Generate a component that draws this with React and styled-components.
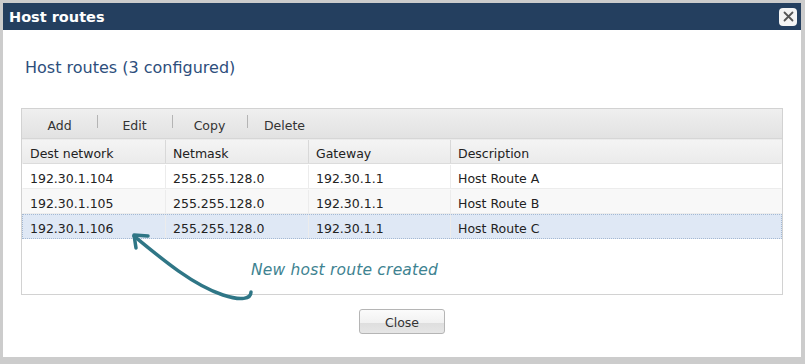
import React from "react";
import styled, { createGlobalStyle } from "styled-components";

const GlobalStyle = createGlobalStyle`
  html, body {
    margin: 0;
    padding: 0;
    background: #ffffff;
  }
  * {
    box-sizing: border-box;
  }
`;

const Frame = styled.div`
  position: relative;
  width: 805px;
  height: 364px;
  border: 3px solid #cccccc;
  border-right-width: 4px;
  border-bottom-width: 7px;
  background: #fff;
  font-family: "DejaVu Sans", Verdana, sans-serif;
  display: flex;
  flex-direction: column;
`;

const TitleBar = styled.div`
  height: 27px;
  flex: none;
  background: #243f5f;
  display: flex;
  align-items: center;
  justify-content: space-between;
  padding: 0 4px 0 6px;
  color: #fff;
  font-weight: bold;
  font-size: 14.5px;
`;

const CloseX = styled.button`
  width: 18px;
  height: 18px;
  border: none;
  border-radius: 4px;
  background: #f4f4f4;
  padding: 0;
  display: flex;
  align-items: center;
  justify-content: center;
`;

const Body = styled.div`
  flex: 1;
  padding: 28px 18px 0 18px;
  display: flex;
  flex-direction: column;
`;

const Heading = styled.h1`
  margin: 0 0 30px 4px;
  font-size: 16px;
  line-height: 20px;
  font-weight: normal;
  color: #2d4e7c;
`;

const Grid = styled.div`
  height: 187px;
  border: 1px solid #d2d2d2;
  display: flex;
  flex-direction: column;
`;

const Toolbar = styled.div`
  height: 30px;
  display: flex;
  align-items: center;
  background: linear-gradient(#efefef, #e2e2e2);
  border-bottom: 1px solid #d6d6d6;
`;

const ToolButton = styled.div`
  width: 75px;
  text-align: center;
  font-size: 12.5px;
  color: #333;
  position: relative;
  padding-top: 4px;
  & + &::before {
    content: "";
    position: absolute;
    left: 0;
    top: 1px;
    height: 13px;
    border-left: 1px solid #b4b4b4;
  }
`;

const Row = styled.div`
  display: grid;
  grid-template-columns: 143px 143px 142px 1fr;
  height: 25px;
  background: ${(p) => (p.$selected ? "#dfe8f5" : p.$alt ? "#f8f8f8" : "#fff")};
  border: 1px ${(p) => (p.$selected ? "dotted #a4b9d3" : "solid transparent")};
  border-bottom: 1px ${(p) => (p.$selected ? "dotted #a4b9d3" : "solid #ececec")};
`;

const HeaderRow = styled(Row)`
  background: linear-gradient(#f4f4f4, #ebebeb);
  border-bottom: 1px solid #dcdcdc;
`;

const Cell = styled.div`
  font-size: 12.5px;
  color: #222;
  padding: 3px 0 0 7px;
  display: flex;
  align-items: center;
  border-right: 1px solid ${(p) => (p.$head ? "#d8d8d8" : "#ececec")};
  &:last-child {
    border-right: none;
  }
`;

const Footer = styled.div`
  display: flex;
  justify-content: center;
  padding-top: 14px;
`;

const CloseButton = styled.button`
  width: 86px;
  height: 25px;
  border: 1px solid #b5b5b5;
  border-radius: 3px;
  background: linear-gradient(#fbfbfb 0%, #f1f1f1 55%, #dedede 56%, #e6e6e6 100%);
  font-family: "DejaVu Sans", Verdana, sans-serif;
  font-size: 12.5px;
  color: #333;
  padding: 2px 0 0 0;
`;

const Note = styled.div`
  position: absolute;
  left: 248px;
  top: 258px;
  font-family: "DejaVu Sans", sans-serif;
  font-style: italic;
  font-size: 15.5px;
  color: #3e8391;
  letter-spacing: 0.2px;
`;

const Arrow = styled.svg`
  position: absolute;
  left: 120px;
  top: 222px;
`;

const rows = [
  ["192.30.1.104", "255.255.128.0", "192.30.1.1", "Host Route A"],
  ["192.30.1.105", "255.255.128.0", "192.30.1.1", "Host Route B"],
  ["192.30.1.106", "255.255.128.0", "192.30.1.1", "Host Route C"],
];

export default function App() {
  return (
    <>
      <GlobalStyle />
      <Frame>
        <TitleBar>
          <span>Host routes</span>
          <CloseX>
            <svg width="11" height="11" viewBox="0 0 11 11">
              <path d="M1.5 1.5 L9.5 9.5 M9.5 1.5 L1.5 9.5" stroke="#555" strokeWidth="1.8" strokeLinecap="round" />
            </svg>
          </CloseX>
        </TitleBar>
        <Body>
          <Heading>Host routes (3 configured)</Heading>
          <Grid>
            <Toolbar>
              {["Add", "Edit", "Copy", "Delete"].map((t) => (
                <ToolButton key={t}>{t}</ToolButton>
              ))}
            </Toolbar>
            <HeaderRow>
              {["Dest network", "Netmask", "Gateway", "Description"].map((h) => (
                <Cell key={h} $head>{h}</Cell>
              ))}
            </HeaderRow>
            {rows.map((r, i) => (
              <Row key={r[0]} $alt={i === 1} $selected={i === 2}>
                {r.map((c, j) => (
                  <Cell key={j}>{c}</Cell>
                ))}
              </Row>
            ))}
          </Grid>
          <Footer>
            <CloseButton>Close</CloseButton>
          </Footer>
        </Body>
        <Arrow width="140" height="85" viewBox="0 0 140 85">
          <path
            d="M11 11 C 40 35, 70 60, 100 70 C 118 76, 128 74, 128 67"
            fill="none"
            stroke="#2f7686"
            strokeWidth="3.5"
            strokeLinecap="round"
          />
          <path
            d="M25 11 L11 10 L13 23"
            fill="none"
            stroke="#2f7686"
            strokeWidth="3.5"
            strokeLinecap="round"
            strokeLinejoin="round"
          />
        </Arrow>
        <Note>New host route created</Note>
      </Frame>
    </>
  );
}
